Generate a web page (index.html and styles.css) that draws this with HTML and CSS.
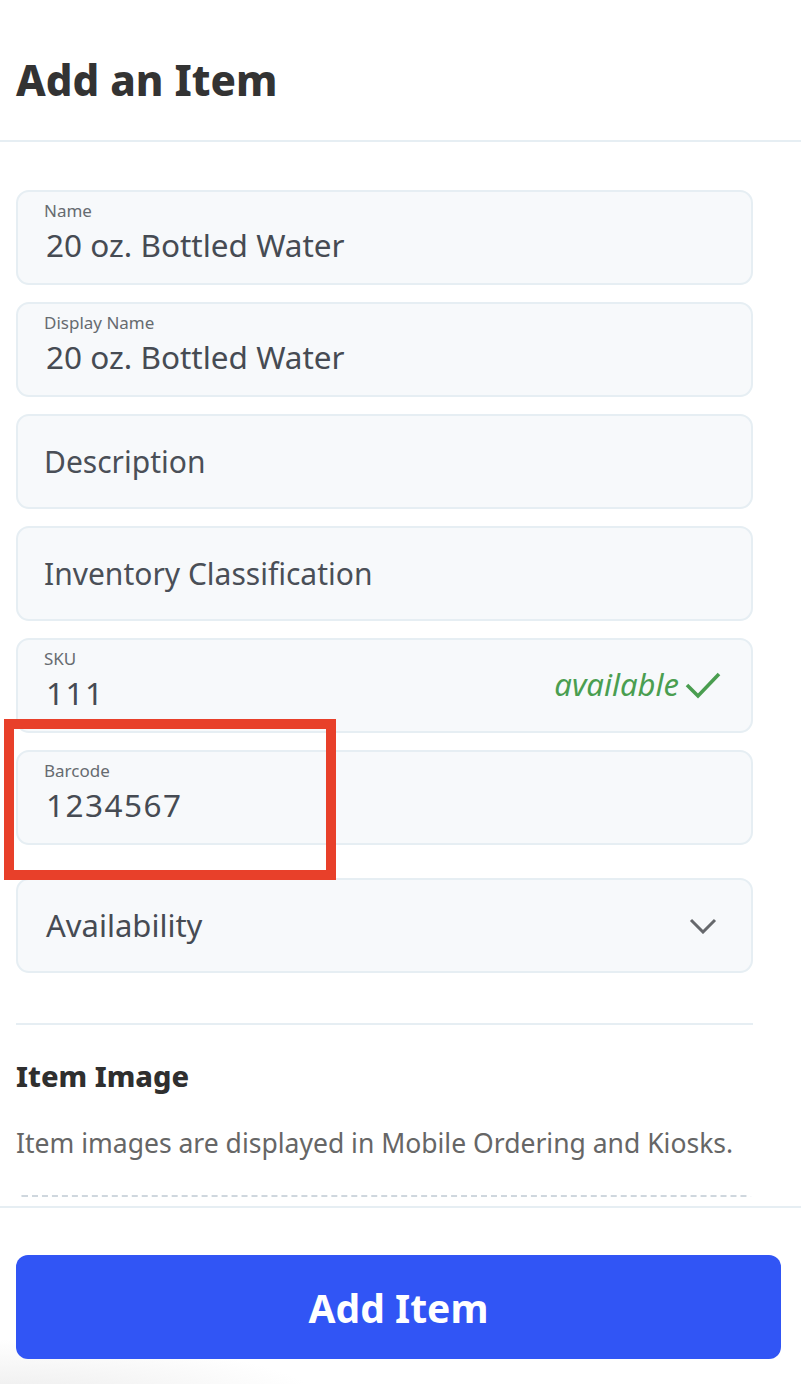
FILE: index.html
```html
<!DOCTYPE html>
<html lang="en">
<head>
<meta charset="utf-8">
<title>Add an Item</title>
<link rel="stylesheet" href="styles.css">
</head>
<body>
<div class="page">
  <header class="page-header">
    <h1 class="title">Add an Item</h1>
  </header>

  <main class="content">
    <form class="form">
      <div class="field">
        <span class="field-label">Name</span>
        <span class="field-value">20 oz. Bottled Water</span>
      </div>
      <div class="field">
        <span class="field-label">Display Name</span>
        <span class="field-value">20 oz. Bottled Water</span>
      </div>
      <div class="field field-empty">
        <span class="placeholder">Description</span>
      </div>
      <div class="field field-empty">
        <span class="placeholder">Inventory Classification</span>
      </div>
      <div class="field field-row">
        <div class="field-stack">
          <span class="field-label">SKU</span>
          <span class="field-value digits">111</span>
        </div>
        <span class="status">available
          <svg class="check" viewBox="0 0 36 28" width="36" height="28" aria-hidden="true">
            <path d="M2 14 L13 25 L34 3" fill="none" stroke="currentColor" stroke-width="3.6"/>
          </svg>
        </span>
      </div>
      <div class="field">
        <span class="field-label">Barcode</span>
        <span class="field-value digits">1234567</span>
      </div>
      <div class="field field-select">
        <span class="select-text">Availability</span>
        <svg class="chevron" viewBox="0 0 28 16" width="28" height="16" aria-hidden="true">
          <path d="M2 2 L14 14 L26 2" fill="none" stroke="currentColor" stroke-width="3"/>
        </svg>
      </div>
    </form>

    <hr class="divider">

    <section class="image-section">
      <h2 class="section-title">Item Image</h2>
      <p class="section-text">Item images are displayed in Mobile Ordering and Kiosks.</p>
      <div class="dropzone"></div>
    </section>
  </main>

  <footer class="page-footer">
    <button class="primary-btn" type="button">Add Item</button>
  </footer>

  <div class="highlight"></div>
</div>
</body>
</html>
```

FILE: styles.css
```css
* { box-sizing: border-box; }

html, body {
  margin: 0;
  padding: 0;
  background: #ffffff;
}

body {
  font-family: "Noto Sans", "Open Sans", sans-serif;
  color: #444a52;
}

.page {
  position: relative;
  width: 801px;
  height: 1384px;
  display: flex;
  flex-direction: column;
  overflow: hidden;
  background: radial-gradient(ellipse 320px 60px at 0 1400px, #ececec, rgba(255,255,255,0) 100%), #fff;
}

.page-header {
  height: 142px;
  flex: none;
  border-bottom: 2px solid #e6eef3;
  padding: 53px 16px 0;
}

.title {
  margin: 0;
  font-size: 42px;
  line-height: 58px;
  font-weight: 800;
  color: #333333;
  margin-top: -2px;
}

.content {
  flex: 1;
  overflow: hidden;
  padding: 48px 48px 0 16px;
  margin-bottom: 9px;
}

.form {
  display: flex;
  flex-direction: column;
  gap: 17px;
}

.field {
  height: 95px;
  background: #f7f9fb;
  border: 2px solid #e6eef3;
  border-radius: 13px;
  padding: 7px 26px 0;
  display: flex;
  flex-direction: column;
}

.field-label {
  font-size: 17px;
  line-height: 24px;
  color: #666b70;
}

.field-value {
  font-size: 31.5px;
  line-height: 43px;
  color: #464b53;
  margin-left: 2px;
}

.digits {
  letter-spacing: 1.5px;
}

.field-empty {
  padding-top: 0;
  justify-content: center;
}

.placeholder {
  font-size: 30px;
  line-height: 41px;
  color: #4a4f57;
}

.field-row {
  flex-direction: row;
  align-items: flex-start;
  justify-content: space-between;
  padding-right: 30px;
}

.field-stack {
  display: flex;
  flex-direction: column;
}

.status {
  display: flex;
  align-items: center;
  gap: 6px;
  margin-top: 16px;
  font-size: 31px;
  line-height: 43px;
  font-style: italic;
  color: #4a9e50;
}

.check { display: block; }

.field-select {
  margin-top: 16px;
  flex-direction: row;
  align-items: center;
  justify-content: space-between;
  padding: 0 34px 0 28px;
}

.select-text {
  font-size: 31px;
  line-height: 43px;
  color: #464b53;
}

.chevron {
  display: block;
  color: #66686c;
}

.divider {
  margin: 50px 0 0;
  border: none;
  border-top: 2px solid #e6eef3;
}

.image-section {
  padding-top: 31px;
}

.section-title {
  margin: 0;
  font-size: 29px;
  line-height: 40px;
  font-weight: 800;
  color: #2f2f2f;
}

.section-text {
  margin: 29px 0 0;
  font-size: 26.5px;
  line-height: 36px;
  color: #666666;
}

.dropzone {
  margin-top: 34px;
  height: 200px;
  border: 2px dashed #cfd7de;
  border-radius: 6px;
}

.page-footer {
  flex: none;
  height: 178px;
  border-top: 2px solid #e6eef3;
  padding: 47px 20px 0 16px;
  background: transparent;
}

.primary-btn {
  display: block;
  width: 100%;
  height: 104px;
  border: none;
  border-radius: 12px;
  background: #3155f5;
  color: #ffffff;
  font-family: "Noto Sans", sans-serif;
  font-size: 39px;
  font-weight: 700;
}

.highlight {
  position: absolute;
  left: 4px;
  top: 719px;
  width: 332px;
  height: 161px;
  border: 10px solid #e8402a;
  pointer-events: none;
}
```
